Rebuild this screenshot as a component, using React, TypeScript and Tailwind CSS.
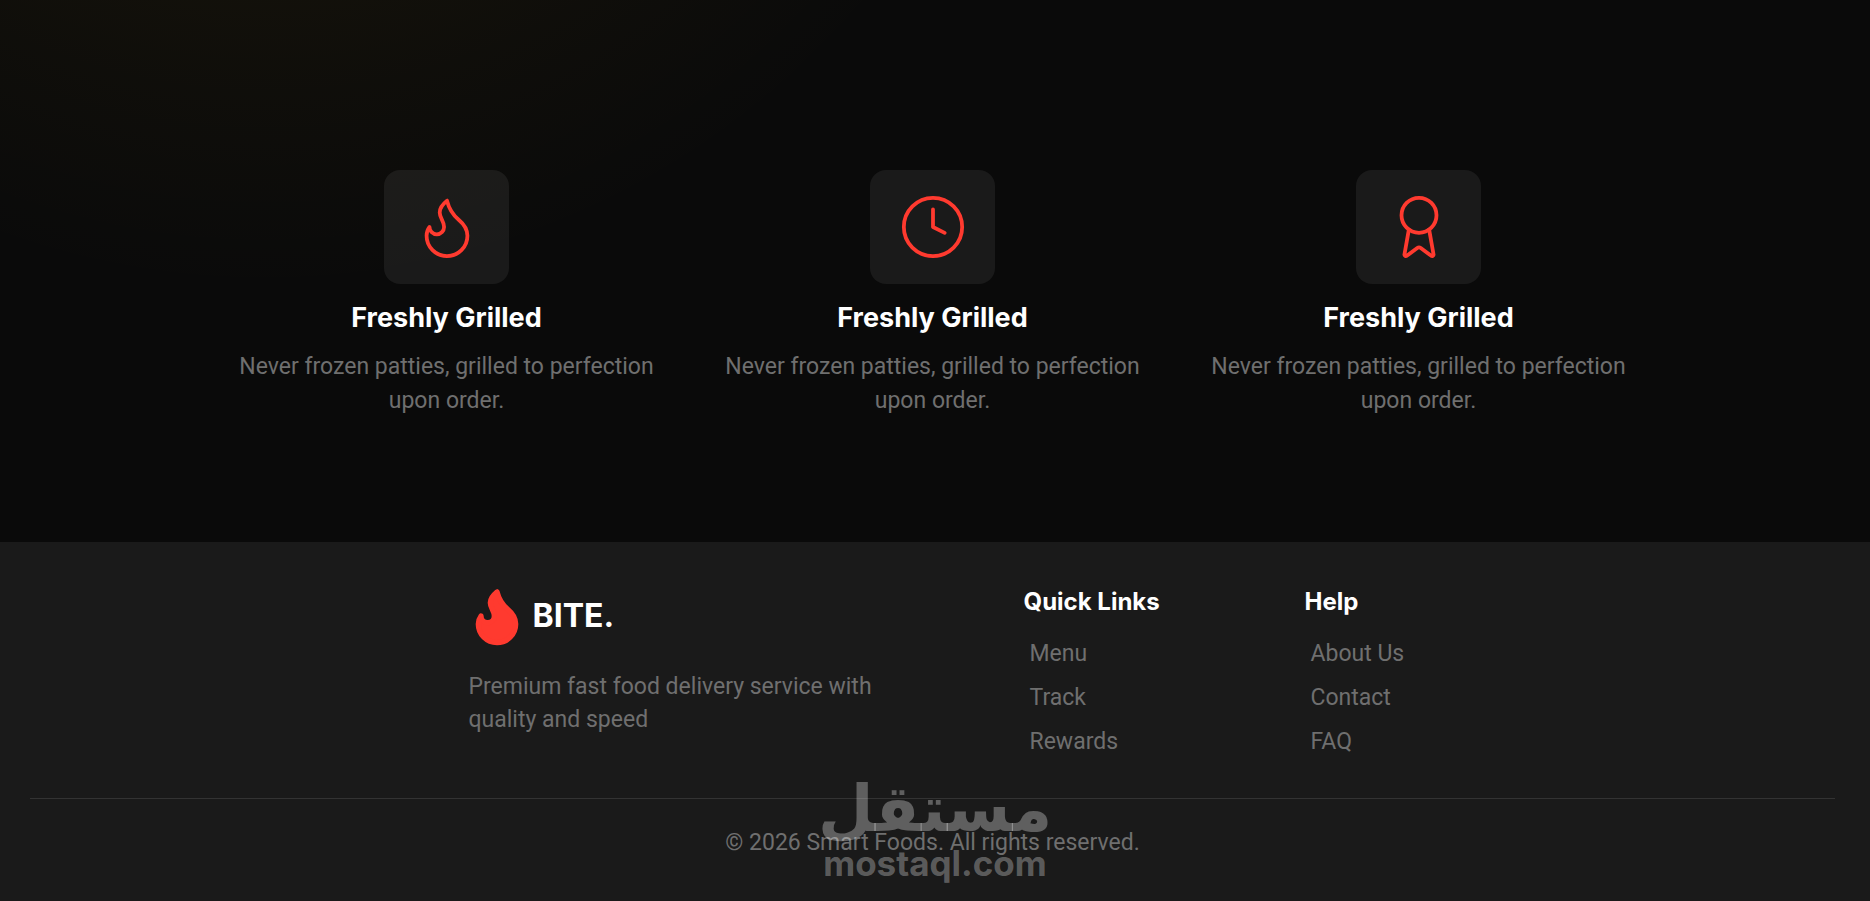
import React from 'react';
import { Award, Clock, Flame, type LucideIcon } from 'lucide-react';

interface Feature {
  icon: LucideIcon;
  title: string;
  text: string;
}

const features: Feature[] = [
  { icon: Flame, title: 'Freshly Grilled', text: 'Never frozen patties, grilled to perfection upon order.' },
  { icon: Clock, title: 'Freshly Grilled', text: 'Never frozen patties, grilled to perfection upon order.' },
  { icon: Award, title: 'Freshly Grilled', text: 'Never frozen patties, grilled to perfection upon order.' },
];

const Features: React.FC = () => (
  <section className="pr-[45px] pl-10 pt-[170px] pb-[124px]">
    <div className="mx-auto grid max-w-[1458px] grid-cols-3">
      {features.map(({ icon: Icon, title, text }, index) => (
        <div key={index} className="flex flex-col items-center text-center">
          <div className="flex h-[114px] w-[125px] items-center justify-center rounded-2xl bg-[#1a1a1a]">
            <Icon size={70} strokeWidth={1.3} className="text-[#ff3a2f]" />
          </div>
          <h3 className="mt-4 text-[27px] leading-9 font-bold text-white">{title}</h3>
          <p className="mt-[14px] max-w-[430px] font-['Roboto',sans-serif] text-[23px] leading-[34px] text-[#6f6f6f]">{text}</p>
        </div>
      ))}
    </div>
  </section>
);

interface LinkColumnProps {
  title: string;
  links: string[];
}

const LinkColumn: React.FC<LinkColumnProps> = ({ title, links }) => (
  <div>
    <h4 className="text-2xl leading-9 font-bold text-white">{title}</h4>
    <ul className="mt-4 flex flex-col gap-2 pl-1.5">
      {links.map((link) => (
        <li key={link}>
          <a href="#" className="block font-['Roboto',sans-serif] text-[23px] leading-9 whitespace-nowrap text-[#6f6f6f] hover:text-white">{link}</a>
        </li>
      ))}
    </ul>
  </div>
);

const Footer: React.FC = () => (
  <footer className="relative grow bg-[#1a1a1a] pr-[35px] pl-[30px] pt-[42px]">
    <div className="mx-auto grid max-w-[928px] grid-cols-[555px_281px_1fr]">
      <div>
        <div className="-ml-1 flex items-center gap-1">
          <Flame size={64} className="text-[#ff3a2f]" fill="currentColor" />
          <span className="text-[32px] font-bold text-white">BITE.</span>
        </div>
        <p className="mt-[22px] max-w-[420px] font-['Roboto',sans-serif] text-[23px] leading-[33px] text-[#6f6f6f]">
          Premium fast food delivery service with quality and speed
        </p>
      </div>
      <LinkColumn title="Quick Links" links={['Menu', 'Track', 'Rewards']} />
      <LinkColumn title="Help" links={['About Us', 'Contact', 'FAQ']} />
    </div>
    <div className="mt-[38px] border-t border-[#333333] pt-7 pb-10 text-center">
      <p className="font-['Roboto',sans-serif] text-[23px] leading-8 text-[#6f6f6f]">© 2026 Smart Foods. All rights reserved.</p>
    </div>
    <div className="pointer-events-none absolute inset-x-0 bottom-5 flex flex-col items-center font-bold text-white/30">
      <span lang="ar" dir="rtl" className="font-['DejaVu_Sans',sans-serif] text-[64px] leading-[72px]">مستقل</span>
      <span className="text-[35px] leading-9">mostaql.com</span>
    </div>
  </footer>
);

export default function App() {
  return (
    <div className="relative flex min-h-screen flex-col bg-[#0a0a0a] font-['Inter',sans-serif]">
      <Features />
      <Footer />
      <div className="pointer-events-none absolute inset-x-0 top-0 h-80 bg-[radial-gradient(circle_at_265px_-504px,rgba(245,190,20,0.035)_500px,rgba(245,190,20,0.025)_584px,rgba(245,190,20,0)_800px)]" />
    </div>
  );
}
